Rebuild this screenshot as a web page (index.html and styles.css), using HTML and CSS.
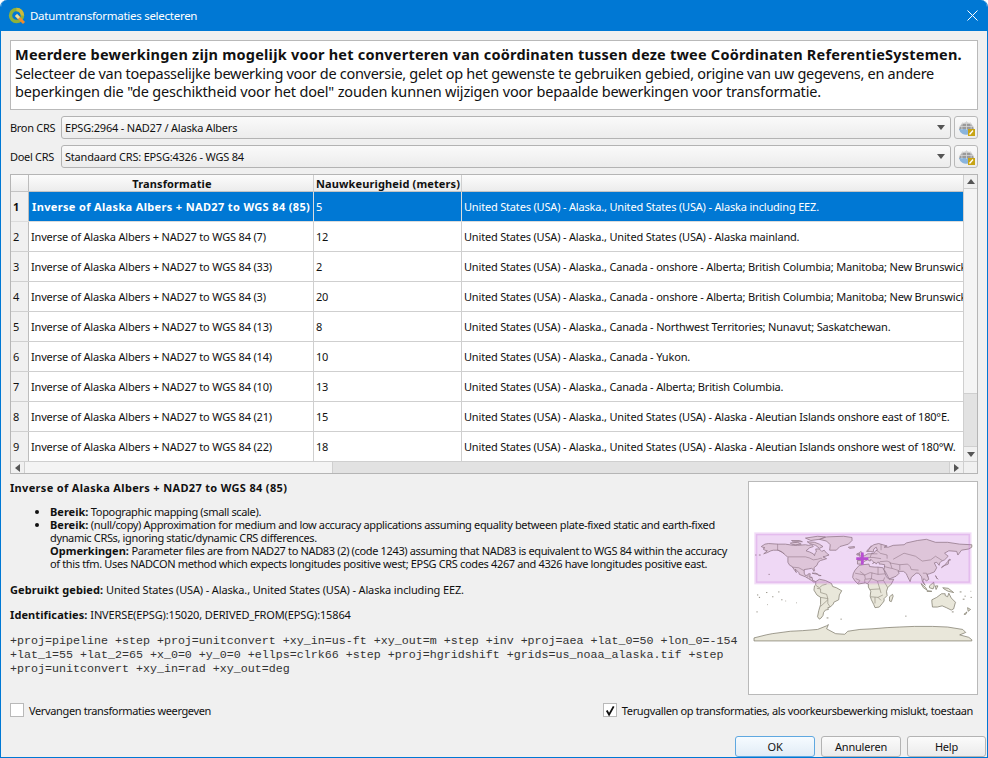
FILE: index.html
```html
<!DOCTYPE html>
<html lang="nl">
<head>
<meta charset="utf-8">
<title>Datumtransformaties selecteren</title>
<link rel="stylesheet" href="styles.css">
</head>
<body>
<div class="dialog">
  <header class="titlebar">
    <svg class="qgis" width="18" height="18" viewBox="0 0 18 18">
      <circle cx="8.5" cy="8.5" r="6" fill="none" stroke="#8db13c" stroke-width="3.4"/>
      <path d="M8.5 2.5a6 6 0 0 1 6 6" fill="none" stroke="#c9b93c" stroke-width="3.4"/>
      <path d="M8 8l8 8" stroke="#ef8c2c" stroke-width="3"/>
      <path d="M8 8l3 3" stroke="#e8e0a0" stroke-width="3"/>
    </svg>
    <span class="title">Datumtransformaties selecteren</span>
    <svg class="close" width="11" height="11" viewBox="0 0 11 11"><path d="M.5.5l10 10M10.5.5l-10 10" stroke="#fff" stroke-width="1"/></svg>
  </header>
  <main class="body">
    <section class="message">
      <p class="msg-strong">Meerdere bewerkingen zijn mogelijk voor het converteren van coördinaten tussen deze twee Coördinaten ReferentieSystemen.</p>
      <p class="msg-line">Selecteer de van toepasselijke bewerking voor de conversie, gelet op het gewenste te gebruiken gebied, origine van uw gegevens, en andere</p>
      <p class="msg-last">beperkingen die "de geschiktheid voor het doel" zouden kunnen wijzigen voor bepaalde bewerkingen voor transformatie.</p>
    </section>

    <div class="crs-row">
      <label class="crs-label">Bron CRS</label>
      <div class="combo"><span>EPSG:2964 - NAD27 / Alaska Albers</span><i class="combo-arrow"></i></div>
      <button class="globe-btn"><svg width="19" height="19" viewBox="0 0 19 19"><use href="#globe"/></svg></button>
    </div>
    <div class="crs-row">
      <label class="crs-label">Doel CRS</label>
      <div class="combo"><span>Standaard CRS: EPSG:4326 - WGS 84</span><i class="combo-arrow"></i></div>
      <button class="globe-btn"><svg width="19" height="19" viewBox="0 0 19 19"><use href="#globe"/></svg></button>
    </div>

    <section class="table">
      <div class="table-main">
        <div class="row head">
          <div class="rh"></div><div class="c1">Transformatie</div><div class="c2">Nauwkeurigheid (meters)</div><div class="c3"></div>
        </div>
        <div class="row selected"><div class="rh">1</div><div class="c1">Inverse of Alaska Albers + NAD27 to WGS 84 (85)</div><div class="c2">5</div><div class="c3">United States (USA) - Alaska., United States (USA) - Alaska including EEZ.</div></div>
        <div class="row"><div class="rh">2</div><div class="c1">Inverse of Alaska Albers + NAD27 to WGS 84 (7)</div><div class="c2">12</div><div class="c3">United States (USA) - Alaska., United States (USA) - Alaska mainland.</div></div>
        <div class="row"><div class="rh">3</div><div class="c1">Inverse of Alaska Albers + NAD27 to WGS 84 (33)</div><div class="c2">2</div><div class="c3">United States (USA) - Alaska., Canada - onshore - Alberta; British Columbia; Manitoba; New Brunswick; Newfoundland</div></div>
        <div class="row"><div class="rh">4</div><div class="c1">Inverse of Alaska Albers + NAD27 to WGS 84 (3)</div><div class="c2">20</div><div class="c3">United States (USA) - Alaska., Canada - onshore - Alberta; British Columbia; Manitoba; New Brunswick; Newfoundland</div></div>
        <div class="row"><div class="rh">5</div><div class="c1">Inverse of Alaska Albers + NAD27 to WGS 84 (13)</div><div class="c2">8</div><div class="c3">United States (USA) - Alaska., Canada - Northwest Territories; Nunavut; Saskatchewan.</div></div>
        <div class="row"><div class="rh">6</div><div class="c1">Inverse of Alaska Albers + NAD27 to WGS 84 (14)</div><div class="c2">10</div><div class="c3">United States (USA) - Alaska., Canada - Yukon.</div></div>
        <div class="row"><div class="rh">7</div><div class="c1">Inverse of Alaska Albers + NAD27 to WGS 84 (10)</div><div class="c2">13</div><div class="c3">United States (USA) - Alaska., Canada - Alberta; British Columbia.</div></div>
        <div class="row"><div class="rh">8</div><div class="c1">Inverse of Alaska Albers + NAD27 to WGS 84 (21)</div><div class="c2">15</div><div class="c3">United States (USA) - Alaska., United States (USA) - Alaska - Aleutian Islands onshore east of 180°E.</div></div>
        <div class="row"><div class="rh">9</div><div class="c1">Inverse of Alaska Albers + NAD27 to WGS 84 (22)</div><div class="c2">18</div><div class="c3">United States (USA) - Alaska., United States (USA) - Alaska - Aleutian Islands onshore west of 180°W.</div></div>
      </div>
      <div class="vscroll">
        <div class="sb-btn"><i class="tri up"></i></div>
        <div class="v-thumb"></div>
        <div class="v-track"></div>
        <div class="sb-btn last"><i class="tri down"></i></div>
      </div>
      <div class="hscroll">
        <div class="hb"><i class="tri left"></i></div>
        <div class="h-thumb"></div>
        <div class="h-track"></div>
        <div class="hb right"><i class="tri right"></i></div>
      </div>
      <div class="corner"></div>
    </section>

    <section class="details">
      <div class="info">
        <h2 class="info-title">Inverse of Alaska Albers + NAD27 to WGS 84 (85)</h2>
        <ul class="info-list">
          <li><b>Bereik:</b> Topographic mapping (small scale).</li>
          <li><b>Bereik:</b> (null/copy) Approximation for medium and low accuracy applications assuming equality between plate-fixed static and earth-fixed<br>dynamic CRSs, ignoring static/dynamic CRS differences.<br><b>Opmerkingen:</b> Parameter files are from NAD27 to NAD83 (2) (code 1243) assuming that NAD83 is equivalent to WGS 84 within the accuracy<br>of this tfm. Uses NADCON method which expects longitudes positive west; EPSG CRS codes 4267 and 4326 have longitudes positive east.</li>
        </ul>
        <p class="info-p"><b>Gebruikt gebied:</b> United States (USA) - Alaska., United States (USA) - Alaska including EEZ.</p>
        <p class="info-p ident"><b>Identificaties:</b> INVERSE(EPSG):15020, DERIVED_FROM(EPSG):15864</p>
        <pre class="proj">+proj=pipeline +step +proj=unitconvert +xy_in=us-ft +xy_out=m +step +inv +proj=aea +lat_0=50 +lon_0=-154
+lat_1=55 +lat_2=65 +x_0=0 +y_0=0 +ellps=clrk66 +step +proj=hgridshift +grids=us_noaa_alaska.tif +step
+proj=unitconvert +xy_in=rad +xy_out=deg</pre>
      </div>
      <figure class="map">
        <svg width="228" height="212" viewBox="-188.3 -172.7 376.9 350.4">
          <g class="land" transform="scale(1,-1)">
            <path d="M-168 66L-162 70-156 71-140 70-128 70-115 68-108 68-95 69-90 68-85 69-82 66-88 64-94 59-88 57-82 54-80 51-79 55-77 57-78 62-72 62-68 58-64 60-60 55-56 52-62 50-66 49-60 46-66 44-70 43-74 40-76 35-81 31-80 26-81 25-83 29-85 30-90 29-97 28-97 22-95 18-91 19-90 21-87 21-88 16-84 15-83 10-80 9-78 8-81 7-85 10-90 13-95 16-105 20-106 23-110 27-112 29-110 23-113 27-117 33-121 35-124 40-124 48-128 52-133 56-140 60-148 60-152 59-158 56-164 54-158 59-162 60-165 62-162 64-166 65Z"/>
            <path d="M-55 60L-44 60-38 66-24 70-18 76-18 81-32 83-60 82-72 78-60 75-54 69Z"/>
            <path d="M-120 72L-108 73-102 70-112 69-118 70ZM-92 74L-80 73-72 70-66 66-72 63-78 68-88 71ZM-95 80L-75 83-62 82-72 78-86 76ZM-118 76L-105 76-100 74-115 74Z"/>
            <path d="M-78 22L-74 20-80 21-84 22ZM-74 19L-69 18-72 18Z"/>
            <path d="M-78 8L-72 12-62 10-52 5-50 0-44 -2-35 -7-39 -14-40 -22-48 -26-49 -29-54 -34-58 -35-57 -38-62 -39-65 -43-66 -48-69 -52-72 -54-75 -50-73 -40-70 -30-70 -18-76 -14-81 -6-80 1-78 3Z"/>
            <path d="M-17 15L-16 21-13 27-6 35 0 36 10 37 11 33 20 32 25 32 33 31 35 27 37 21 39 16 43 12 51 12 47 4 41 -2 39 -8 40 -15 35 -20 35 -24 32 -28 27 -34 20 -35 18 -30 14 -22 12 -16 13 -8 9 -1 9 4 4 6-8 4-13 9Z"/>
            <path d="M49 -13L50 -16 47 -25 44 -24 44 -17Z"/>
            <path d="M-9 37L-9 43-2 43-1 48-4 48 3 51 8 54 12 54 18 55 21 59 24 60 22 65 18 62 17 57 12 58 6 58 10 63 18 69 26 71 40 67 35 65 42 65 50 68 68 69 72 72 90 76 105 78 120 73 140 73 160 70 180 69 180 65 175 62 163 60 157 52 155 58 142 59 135 55 141 50 135 44 130 42 127 39 126 35 122 40 118 39 122 31 118 24 110 21 106 20 109 12 105 9 101 13 99 9 103 2 100 5 98 10 97 16 92 22 88 22 80 15 78 8 73 18 72 21 67 25 58 25 60 22 55 17 45 13 43 13 39 21 35 28 36 36 30 37 27 37 27 40 24 40 22 37 20 40 16 38 18 40 13 45 12 42 8 44 3 42 0 39 -2 37Z"/>
            <path d="M-6 50L1 51-3 58-6 56ZM-10 52L-6 52-7 55-10 54Z"/>
            <path d="M-24 65L-14 66-14 64-22 63Z"/>
            <path d="M131 33L136 35 141 37 142 43 140 41 135 35 130 31ZM141 43L145 44 143 45Z"/>
            <path d="M96 5L104 -2 106 -6 100 -2ZM106 -7L114 -8 106 -8ZM110 1L117 7 118 1 116 -4 110 -2ZM120 1L124 1 121 -5 120 -2ZM132 -2L141 -3 150 -10 141 -8 134 -4ZM120 18L122 14 124 12 122 14Z"/>
            <path d="M114 -22L122 -18 130 -12 136 -12 136 -15 140 -17 142 -11 146 -19 153 -26 150 -37 146 -39 138 -35 131 -32 123 -34 115 -34 114 -26Z"/>
            <path d="M173 -35L178 -38 174 -41ZM167 -46L172 -42 170 -46Z"/>
            <path d="M-180 -85L-160 -80-150 -78-120 -74-100 -73-75 -71-60 -65-57 -63-60 -70-45 -78-30 -79-25 -74-5 -71 15 -70 40 -68 60 -67 85 -66 115 -66 140 -67 165 -71 170 -76 160 -80 175 -84 180 -88 180 -90 -180 -90Z"/>
          </g>
          <g class="specks" transform="scale(1,-1)">
            <path d="M-175 -14h2M-172 -18h2M-160 -10h2M-150 -17h2M-140 -9h2M-135 -22h2M-128 -24h1M-176 -42h2M-158 -30h1M-110 -27h1M-60 -52h3M-37 -54h2M70 -49h2M165 -21h3M178 -18h2M168 -16h2M160 -9h3M147 -42h3M-172 52h3M-178 52h2M-156 20h2M178 -8h1"/>
          </g>
          <g class="borders" transform="scale(1,-1)">
            <path d="M-141 70L-141 60-135 58-130 54M-124 49L-95 49-88 47-82 44-75 45-69 47-67 45M-117 32L-106 31-97 26M-92 15L-90 18M-89 14L-84 15"/>
            <path d="M-70 -18L-58 -20-58 -28-54 -34M-70 -33L-58 -22M-70 -10L-60 -13-58 -20M-76 -3L-70 -4-70 -10M-78 2L-72 -2-67 2-60 4"/>
            <path d="M-13 22L3 19 12 23 25 20 25 32M25 20L37 21M-5 25L3 19 4 12 14 13 24 9 34 10 36 15M14 13L15 23M24 9L28 -4 30 -11M12 -5L28 -4M13 -17L25 -18 33 -14M20 -18L20 -28M25 -18L30 -23M3 6L3 12M-8 5L-5 10-12 13M8 5L14 13M34 10L41 -2"/>
            <path d="M2 42L-2 43M28 41L40 42 45 40 48 30M35 33L47 30 48 30 60 26M44 39L61 36 61 27M61 36L74 37 78 33 80 28 92 27M50 45L68 55 87 50 98 42 112 44 120 50 131 43M28 55L40 52 40 46M24 54L14 54 12 48M8 48L17 48 30 46M22 60L28 56M30 70L30 60M8 58L14 68M99 22L105 22 108 15"/>
          </g>
          <rect class="extent" x="-177" y="-87" width="354" height="81"/>
          <path class="cross" d="M-11 -46h20M-1 -56v20"/>
        </svg>
      </figure>
    </section>

    <div class="options">
      <label class="check"><i class="box"></i>Vervangen transformaties weergeven</label>
      <label class="check"><i class="box"><svg width="13" height="13" viewBox="0 0 13 13"><path d="M3 6.5L5.5 11 10.5 2" fill="none" stroke="#111" stroke-width="2"/></svg></i>Terugvallen op transformaties, als voorkeursbewerking mislukt, toestaan</label>
    </div>

    <div class="buttons">
      <button class="btn primary">OK</button>
      <button class="btn">Annuleren</button>
      <button class="btn">Help</button>
    </div>
  </main>
</div>
<svg class="defs" width="0" height="0">
  <defs>
    <g id="globe">
      <path d="M2 12a7.5 7.5 0 0 1 15 0z" fill="#9a9a9a"/>
      <path d="M2 11a7 7 0 0 0 9 5.5V11z" fill="#8ab4dc"/>
      <path d="M2.5 8.5h14M4.5 5.5h10M9.5 3v9M6 4q-2 4-1 8M13 4q2 4 1 8" stroke="#d6d6d6" stroke-width=".8" fill="none"/>
      <rect x="11" y="11" width="7" height="7" fill="#c8a414"/>
      <path d="M12.5 16.5l3.5-4" stroke="#fff" stroke-width="1.4"/>
    </g>
  </defs>
</svg>
</body>
</html>
```
FILE: styles.css
```css
* { box-sizing: border-box; }
html, body { margin: 0; padding: 0; }
body { width: 988px; height: 758px; overflow: hidden; background: #fff; font-family: "Noto Sans", "Liberation Sans", sans-serif; font-size: 11px; color: #111; }
.defs { position: absolute; }
.dialog { width: 988px; height: 758px; display: flex; flex-direction: column; background: #f0f0f0; border: 1px solid #0078d4; border-top: 0; border-radius: 7px 7px 0 0; overflow: hidden; }
.titlebar { height: 31px; flex: none; background: #0078d4; color: #fff; display: flex; align-items: center; padding: 0 10px 0 8px; margin: 0 -1px; }
.qgis { flex: none; margin-right: 4px; }
.title { font-size: 11.5px; letter-spacing: -.27px; flex: 1; }
.close { flex: none; }
.body { flex: 1; display: flex; flex-direction: column; padding: 9px 9px 0 9px; min-height: 0; }
.body > * { flex: none; }
.message { height: 70px; background: #fff; border: 1px solid #b9b9b9; padding: 4px; }
.message p { margin: 0; height: 18.5px; line-height: 18.5px; white-space: nowrap; font-size: 14.5px; }
.msg-strong { font-weight: 700; letter-spacing: .22px; }
.msg-line { letter-spacing: -.285px; }
.msg-last { letter-spacing: -.18px; }
.crs-row { display: flex; align-items: center; height: 23px; margin-top: 6px; }
.crs-label { width: 51px; flex: none; letter-spacing: -.3px; }
.combo { flex: 1; height: 23px; border: 1px solid #b3b3b3; border-radius: 3px; background: linear-gradient(#fafafa, #ececec); display: flex; align-items: center; justify-content: space-between; padding: 0 5px 0 3px; letter-spacing: -.2px; }
.combo-arrow { width: 0; height: 0; border: 4px solid transparent; border-top: 5px solid #555; border-bottom: 0; }
.globe-btn { flex: none; width: 24px; height: 23px; margin-left: 3px; padding: 0; border: 1px solid #b9b9b9; border-radius: 3px; background: linear-gradient(#fafafa, #ececec); display: flex; align-items: center; justify-content: center; }
.table { margin-top: 6px; height: 300px; border: 1px solid #b5b5b5; background: #fff; display: grid; grid-template-columns: 952px 14px; grid-template-rows: 286px 12px; }
.table-main { overflow: hidden; grid-column: 1; grid-row: 1; }
.row { display: grid; grid-template-columns: 18px 285px 148px 501px; height: 30px; border-bottom: 1px solid #cfcfcf; background: #fff; letter-spacing: -.18px; }
.row > div { overflow: hidden; white-space: nowrap; padding: 0 0 0 2px; line-height: 29px; border-right: 1px solid #cfcfcf; }
.row > .rh { background: #f0f0f0; border-right-color: #bdbdbd; }
.row > .c3 { border-right: 0; }
.head { height: 17px; background: linear-gradient(#fcfcfc, #ececec); border-bottom: 1px solid #c4c4c4; font-weight: 700; letter-spacing: .13px; }
.row.head > div { line-height: 17px; background: none; }
.head .c1 { text-align: center; }
.selected { background: #0078d4; color: #fff; border-bottom-color: #dcdcdc; }
.selected .c1 { font-weight: 700; letter-spacing: .35px; padding-left: 3px; }
.selected > .rh { color: #111; font-weight: 700; }
.selected > div { border-right-color: #dcdcdc; }
.vscroll { grid-column: 2; grid-row: 1; display: flex; flex-direction: column; background: #f0f0f0; border-left: 1px solid #cfcfcf; }
.sb-btn { height: 14px; flex: none; display: flex; align-items: center; justify-content: center; border-bottom: 1px solid #cfcfcf; }
.sb-btn.last { border-bottom: 0; border-top: 1px solid #cfcfcf; height: 15px; }
.v-thumb { height: 205px; flex: none; background: #f4f4f4; border-bottom: 1px solid #cfcfcf; }
.v-track { flex: 1; background: #e2e2e2; }
.tri { display: block; width: 0; height: 0; border: 4px solid transparent; }
.tri.up { border-top: 0; border-bottom: 5px solid #555; }
.tri.down { border-bottom: 0; border-top: 5px solid #555; }
.tri.left { border-left: 0; border-right: 5px solid #555; }
.tri.right { border-right: 0; border-left: 5px solid #555; }
.hscroll { grid-column: 1; grid-row: 2; display: flex; background: #f0f0f0; border-top: 1px solid #cfcfcf; height: 12px; }
.hb { width: 14px; flex: none; display: flex; align-items: center; justify-content: center; border-right: 1px solid #cfcfcf; }
.hb.right { border-right: 0; border-left: 1px solid #cfcfcf; }
.h-thumb { width: 308px; flex: none; background: #f4f4f4; border-right: 1px solid #cfcfcf; }
.h-track { flex: 1; background: #e2e2e2; }
.corner { grid-column: 2; grid-row: 2; background: #f0f0f0; border-left: 1px solid #cfcfcf; border-top: 1px solid #cfcfcf; }
.details { display: flex; justify-content: space-between; margin-top: 7px; height: 214px; }
.info { width: 735px; }
.info-title { margin: 0; font-size: 11px; font-weight: 700; line-height: 14px; letter-spacing: .33px; }
.info-list { margin: 10px 0 0; padding: 0 0 0 40px; list-style: disc; line-height: 13px; letter-spacing: -.35px; }
.info-list li { margin: 0; white-space: nowrap; }
.info-list b { letter-spacing: 0; }
.info-p { margin: 13px 0 0; line-height: 13px; white-space: nowrap; letter-spacing: -.14px; }
.info-p b { letter-spacing: .1px; }
.info-p.ident { margin-top: 12px; }
.proj { margin: 13px 0 0; font-family: "Liberation Mono", monospace; font-size: 11.67px; line-height: 14px; color: #333; }
.map { margin: 0; width: 230px; height: 214px; background: #fff; border: 1px solid #b9b9b9; flex: none; }
.map svg { display: block; }
.land path { fill: #e9e7da; stroke: #7d786a; stroke-width: 1.2px; stroke-linejoin: round; }
.specks path { fill: none; stroke: #7d786a; stroke-width: 1.4px; }
.borders path { fill: none; stroke: #7d786a; stroke-width: .9px; }
.extent { fill: rgba(190, 90, 215, .24); stroke: rgba(190, 90, 215, .22); stroke-width: 5px; }
.cross { fill: none; stroke: #b84fd2; stroke-width: 4.5px; }
.options { display: flex; justify-content: space-between; margin-top: 8px; height: 14px; padding-right: 5px; letter-spacing: -.36px; }
.check { display: flex; align-items: center; }
.box { width: 14px; height: 14px; background: #fff; border: 1px solid #b9b9b9; margin-right: 5px; display: flex; align-items: center; justify-content: center; font-style: normal; }
.buttons { display: flex; justify-content: flex-end; gap: 6px; margin-top: 19px; margin-right: -8px; }
.btn { width: 80px; height: 21px; padding: 0; border: 1px solid #b3b3b3; border-radius: 3px; background: linear-gradient(#fbfbfb, #ebebeb); font: inherit; letter-spacing: -.2px; color: #111; }
.btn:last-child { width: 79px; }
.btn.primary { border-color: #5fa8e0; background: linear-gradient(#f6fbff, #e1ecf6); }
```
